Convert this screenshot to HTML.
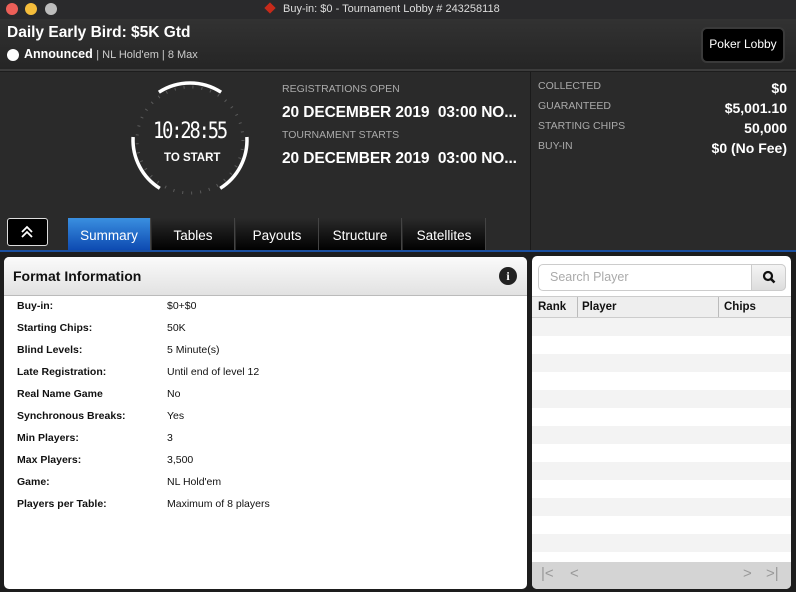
<!DOCTYPE html>
<html><head><meta charset="utf-8"><style>
*{margin:0;padding:0;box-sizing:border-box}
body{width:796px;height:592px;overflow:hidden;background:#1d1d1d;font-family:"Liberation Sans",sans-serif;position:relative;color:#fff}
.abs{position:absolute}
.tb{left:0;top:0;width:796px;height:19px;background:#2a2a2c;font-size:11px;color:#ddd}
.dot{width:12px;height:12px;border-radius:50%;top:3px}
.hdr{left:0;top:19px;width:796px;height:52px;background:linear-gradient(#323232,#252525);border-bottom:2px solid #3c3c3c}
.main{left:0;top:72px;width:796px;height:178px;background:#2a2a2a}
.lbl{font-size:10.5px;color:#aaa}
.big{font-size:15.5px;font-weight:bold;color:#fff;letter-spacing:-0.1px}
.tab{top:218px;height:33px;width:83px;background:linear-gradient(#2a2a2a,#000);font-size:13.5px;text-align:center;line-height:36px;border-right:1px solid #444}
.panel{background:#fff;border-radius:5px}
.row{position:absolute;left:17px;font-size:10.5px;color:#111;white-space:nowrap}
.row b{display:inline-block;width:150px}
</style></head><body>
<div class="abs tb">
<div class="abs dot" style="left:6px;background:#ed5f58"></div>
<div class="abs dot" style="left:25px;background:#f5bd3b"></div>
<div class="abs dot" style="left:45px;background:#bdbdbd"></div>
<div class="abs" style="left:266px;top:4px;width:8px;height:8px;background:#c62a1a;transform:rotate(45deg)"></div>
<div class="abs" style="left:283px;top:3px">Buy-in: $0 - Tournament Lobby # 243258118</div>
</div>
<div class="abs hdr">
<div class="abs" style="left:7px;top:5px;font-size:15.5px;font-weight:bold">Daily Early Bird: $5K Gtd</div>
<div class="abs" style="left:7px;top:30px;width:12px;height:12px;border-radius:50%;background:#fff"></div>
<div class="abs" style="left:24px;top:28px;font-size:12.5px"><b>Announced</b> <span style="font-size:11px;color:#ccc">| NL Hold'em | 8 Max</span></div>
<div class="abs" style="left:701px;top:8px;width:84px;height:36px;background:#000;border:2px solid #3a3a3a;border-radius:6px;font-size:12px;text-align:center;line-height:31px">Poker Lobby</div>
</div>
<div class="abs main">
<svg class="abs" style="left:0;top:-72px" width="796" height="250">
<circle cx="190" cy="140" r="53" fill="none" stroke="#5a5a5a" stroke-width="3" stroke-dasharray="1 8"/>
<g fill="none" stroke="#fff" stroke-width="3.5">
<path d="M158.9 92.2 A57 57 0 0 1 221.1 92.2"/>
<path d="M246.9 137 A57 57 0 0 1 220.2 188.3"/>
<path d="M159.8 188.3 A57 57 0 0 1 133.1 137"/>
</g>
</svg>
<div class="abs" style="left:153px;top:47px;font-size:22px;font-family:'DejaVu Sans Mono',monospace;letter-spacing:-2.5px;transform:scaleX(.85);transform-origin:left">10:28:55</div>
<div class="abs" style="left:164px;top:80px;font-size:11.5px;font-weight:bold">TO START</div>
<div class="abs lbl" style="left:282px;top:11px">REGISTRATIONS OPEN</div>
<div class="abs big" style="left:282px;top:32px">20 DECEMBER 2019&nbsp; 03:00 NO...</div>
<div class="abs lbl" style="left:282px;top:57px">TOURNAMENT STARTS</div>
<div class="abs big" style="left:282px;top:78px">20 DECEMBER 2019&nbsp; 03:00 NO...</div>
<div class="abs" style="left:530px;top:0;width:1px;height:178px;background:#1a1a1a"></div>
<div class="abs lbl" style="left:538px;top:8px">COLLECTED</div>
<div class="abs lbl" style="left:538px;top:28px">GUARANTEED</div>
<div class="abs lbl" style="left:538px;top:48px">STARTING CHIPS</div>
<div class="abs lbl" style="left:538px;top:68px">BUY-IN</div>
<div class="abs" style="right:9px;top:6px;font-size:14px;font-weight:bold;text-align:right;line-height:20px">$0<br>$5,001.10<br>50,000<br>$0 (No Fee)</div>
</div>
<div class="abs" style="left:7px;top:218px;width:41px;height:28px;background:#000;border:1px solid #ddd;border-radius:3px"></div>
<svg class="abs" style="left:19px;top:224px" width="16" height="16"><path d="M3 8 L8 3 L13 8 M3 13 L8 8 L13 13" fill="none" stroke="#fff" stroke-width="1.8"/></svg>
<div class="abs tab" style="left:68px;background:linear-gradient(#3a8fe0,#0c48b0)">Summary</div>
<div class="abs tab" style="left:152px">Tables</div>
<div class="abs tab" style="left:236px">Payouts</div>
<div class="abs tab" style="left:319px">Structure</div>
<div class="abs tab" style="left:403px">Satellites</div>
<div class="abs" style="left:0;top:250px;width:796px;height:2px;background:#1a4fa0"></div>
<div class="abs panel" style="left:4px;top:257px;width:523px;height:332px;overflow:hidden">
<div style="height:39px;background:linear-gradient(#fafafa,#e2e2e2);border-bottom:1px solid #bbb;color:#111;font-size:14px;font-weight:bold;padding:11px 9px">Format Information</div>
<div class="abs" style="right:10px;top:10px;width:18px;height:18px;border-radius:50%;background:#222;color:#fff;font-size:12px;font-weight:bold;text-align:center;line-height:18px;font-family:serif">i</div>
</div>
<div class="abs" style="left:0;top:0;width:520px">
<div class="row" style="top:300px"><b>Buy-in:</b>$0+$0</div>
<div class="row" style="top:322px"><b>Starting Chips:</b>50K</div>
<div class="row" style="top:344px"><b>Blind Levels:</b>5 Minute(s)</div>
<div class="row" style="top:366px"><b>Late Registration:</b>Until end of level 12</div>
<div class="row" style="top:388px"><b>Real Name Game</b>No</div>
<div class="row" style="top:410px"><b>Synchronous Breaks:</b>Yes</div>
<div class="row" style="top:432px"><b>Min Players:</b>3</div>
<div class="row" style="top:454px"><b>Max Players:</b>3,500</div>
<div class="row" style="top:476px"><b>Game:</b>NL Hold'em</div>
<div class="row" style="top:498px"><b>Players per Table:</b>Maximum of 8 players</div>
</div>
<div class="abs panel" style="left:532px;top:256px;width:259px;height:333px;overflow:hidden;background:#fff">
<div class="abs" style="left:6px;top:8px;width:248px;height:27px;border:1px solid #ccc;border-radius:5px;background:#fff;color:#aaa;font-size:12.5px;padding:5px 11px">Search Player</div>
<div class="abs" style="left:219px;top:8px;width:35px;height:27px;border:1px solid #ccc;border-radius:0 5px 5px 0;background:linear-gradient(#f4f4f4,#ddd)"></div>
<svg class="abs" style="left:230px;top:14px" width="14" height="14"><circle cx="6" cy="6" r="4" fill="none" stroke="#111" stroke-width="2.2"/><line x1="9" y1="9" x2="12.5" y2="12.5" stroke="#111" stroke-width="2.5"/></svg>
<div class="abs" style="left:0;top:40px;width:259px;height:22px;background:#eee;border-top:1px solid #ccc;border-bottom:1px solid #ccc;font-size:11.5px;font-weight:bold;color:#111">
<span class="abs" style="left:6px;top:4px">Rank</span><span class="abs" style="left:45px;top:0;height:20px;border-left:1px solid #bbb"></span>
<span class="abs" style="left:50px;top:4px">Player</span><span class="abs" style="left:186px;top:0;height:20px;border-left:1px solid #bbb"></span>
<span class="abs" style="left:192px;top:4px">Chips</span></div>
<div class="abs" style="left:0;top:62px;width:259px;height:244px;background:repeating-linear-gradient(#f3f3f3 0 18px,#fff 18px 36px)"></div>
<div class="abs" style="left:0;top:306px;width:259px;height:27px;background:#d4d4d4;color:#999;font-size:15px">
<span class="abs" style="left:9px;top:3px">|&lt;</span><span class="abs" style="left:38px;top:3px">&lt;</span>
<span class="abs" style="left:211px;top:3px">&gt;</span><span class="abs" style="left:234px;top:3px">&gt;|</span></div>
</div>
</body></html>
